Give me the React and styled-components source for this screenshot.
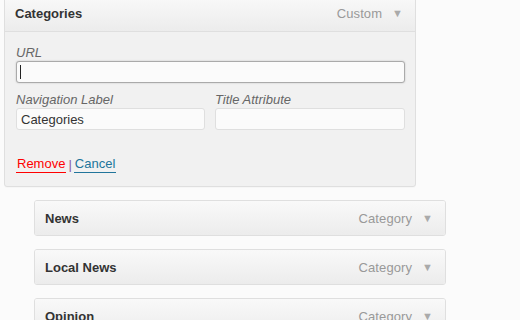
import React from "react";
import styled, { createGlobalStyle } from "styled-components";

const GlobalStyle = createGlobalStyle`
  html, body {
    margin: 0;
    padding: 0;
    background: #fbfbfb;
    font-family: "Liberation Sans", Arial, sans-serif;
    font-size: 13px;
    overflow: hidden;
  }
`;

const Page = styled.div`
  width: 520px;
  height: 320px;
  overflow: hidden;
  padding-left: 4px;
  box-sizing: border-box;
`;

const Panel = styled.div`
  width: 412px;
  margin-top: -5px;
  border: 1px solid #dfdfdf;
  border-radius: 3px;
  box-sizing: border-box;
  background: #f1f1f1;
  box-shadow: 0 1px 0 rgba(0, 0, 0, 0.02);
`;

const Bar = styled.div`
  display: flex;
  align-items: center;
  height: 35px;
  padding: 0 12px 0 10px;
  background: linear-gradient(to bottom, #f9f9f9, #ececec);
  border-bottom: ${(p) => (p.open ? "1px solid #dfdfdf" : "none")};
  border-radius: 3px 3px 0 0;
`;

const Title = styled.span`
  flex: 1;
  font-weight: bold;
  color: #333;
`;

const Kind = styled.span`
  color: #999;
  letter-spacing: 0.1px;
`;

const Arrow = styled.span`
  margin-left: 10px;
  color: #aaa;
  font-size: 11px;
  line-height: 1;
`;

const Body = styled.div`
  padding: 12px 10px 14px 11px;
`;

const Label = styled.label`
  display: block;
  font-style: italic;
  color: #666;
  line-height: 16px;
  padding-top: 1px;
`;

const Field = styled.div`
  position: relative;
`;

const Input = styled.input`
  display: block;
  width: 100%;
  height: 22px;
  box-sizing: border-box;
  margin: 0;
  padding: 0 4px;
  font: 13px "Liberation Sans", Arial, sans-serif;
  color: #333;
  background: #fbfbfb;
  border: 1px solid ${(p) => (p.focused ? "#aaa" : "#dfdfdf")};
  border-radius: 3px;
  box-shadow: ${(p) => (p.focused ? "0 0 2px rgba(0,0,0,0.2)" : "none")};
  outline: none;
`;

const Caret = styled.span`
  position: absolute;
  left: 4px;
  top: 4px;
  width: 1px;
  height: 14px;
  background: #222;
`;

const Row = styled.div`
  display: grid;
  grid-template-columns: 189px 190px;
  column-gap: 10px;
  margin-top: 8px;
`;

const Actions = styled.div`
  display: flex;
  align-items: center;
  margin-top: 26px;
  margin-bottom: -1px;
  line-height: 16px;
`;

const Link = styled.a`
  color: ${(p) => p.color};
  border-bottom: 1px solid ${(p) => p.color};
  padding: 0 1px;
  text-decoration: none;
`;

const Sep = styled.span`
  color: #8a5a9c;
  margin: 0 2px;
`;

const List = styled.div`
  display: flex;
  flex-direction: column;
  gap: 13px;
  margin: 13px 0 0 30px;
`;

const Item = styled.div`
  width: 412px;
  border: 1px solid #dfdfdf;
  border-radius: 3px;
  box-sizing: border-box;
  overflow: hidden;
`;

const ItemBar = styled(Bar)`
  height: 34px;
  padding-left: 10px;
  border-radius: 0;
`;

const items = ["News", "Local News", "Opinion"];

export default function App() {
  return (
    <Page>
      <GlobalStyle />
      <Panel>
        <Bar open>
          <Title>Categories</Title>
          <Kind>Custom</Kind>
          <Arrow>▼</Arrow>
        </Bar>
        <Body>
          <Label>URL</Label>
          <Field>
            <Input focused readOnly value="" />
            <Caret />
          </Field>
          <Row>
            <div>
              <Label>Navigation Label</Label>
              <Input readOnly value="Categories" />
            </div>
            <div>
              <Label>Title Attribute</Label>
              <Input readOnly value="" />
            </div>
          </Row>
          <Actions>
            <Link color="#f00">Remove</Link>
            <Sep>|</Sep>
            <Link color="#21759b">Cancel</Link>
          </Actions>
        </Body>
      </Panel>
      <List>
        {items.map((name) => (
          <Item key={name}>
            <ItemBar>
              <Title>{name}</Title>
              <Kind>Category</Kind>
              <Arrow>▼</Arrow>
            </ItemBar>
          </Item>
        ))}
      </List>
    </Page>
  );
}
